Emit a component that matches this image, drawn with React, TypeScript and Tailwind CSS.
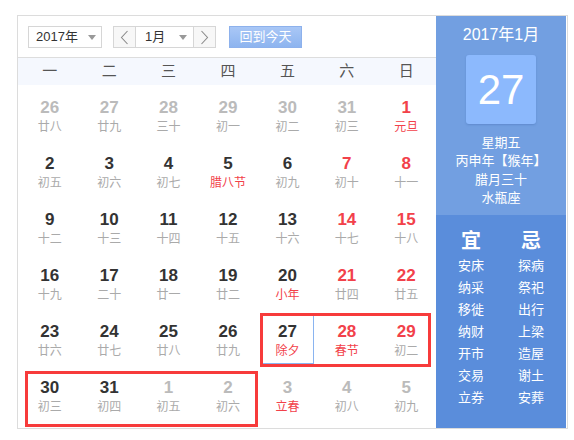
type Day = { n: number; l: string; dim?: boolean; redN?: boolean; redL?: boolean; sel?: boolean };

const weekdays = ['一', '二', '三', '四', '五', '六', '日'];

const days: Day[] = [
  { n: 26, l: '廿八', dim: true }, { n: 27, l: '廿九', dim: true }, { n: 28, l: '三十', dim: true },
  { n: 29, l: '初一', dim: true }, { n: 30, l: '初二', dim: true }, { n: 31, l: '初三', dim: true },
  { n: 1, l: '元旦', redN: true, redL: true },

  { n: 2, l: '初五' }, { n: 3, l: '初六' }, { n: 4, l: '初七' }, { n: 5, l: '腊八节', redL: true },
  { n: 6, l: '初九' }, { n: 7, l: '初十', redN: true }, { n: 8, l: '十一', redN: true },

  { n: 9, l: '十二' }, { n: 10, l: '十三' }, { n: 11, l: '十四' }, { n: 12, l: '十五' },
  { n: 13, l: '十六' }, { n: 14, l: '十七', redN: true }, { n: 15, l: '十八', redN: true },

  { n: 16, l: '十九' }, { n: 17, l: '二十' }, { n: 18, l: '廿一' }, { n: 19, l: '廿二' },
  { n: 20, l: '小年', redL: true }, { n: 21, l: '廿四', redN: true }, { n: 22, l: '廿五', redN: true },

  { n: 23, l: '廿六' }, { n: 24, l: '廿七' }, { n: 25, l: '廿八' }, { n: 26, l: '廿九' },
  { n: 27, l: '除夕', redL: true, sel: true }, { n: 28, l: '春节', redN: true, redL: true }, { n: 29, l: '初二', redN: true },

  { n: 30, l: '初三' }, { n: 31, l: '初四' }, { n: 1, l: '初五', dim: true }, { n: 2, l: '初六', dim: true },
  { n: 3, l: '立春', dim: true, redL: true }, { n: 4, l: '初八', dim: true }, { n: 5, l: '初九', dim: true },
];

const yi = ['安床', '纳采', '移徙', '纳财', '开市', '交易', '立券'];
const ji = ['探病', '祭祀', '出行', '上梁', '造屋', '谢土', '安葬'];

function Caret() {
  return <span className="w-0 h-0 border-x-[4px] border-x-transparent border-t-[5px] border-t-[#999]" />;
}

function Arrow({ dir }: { dir: 'l' | 'r' }) {
  return (
    <svg width="9" height="15" viewBox="0 0 9 15" fill="none" stroke="#8a8a8a" strokeWidth="1.1">
      <path d={dir === 'l' ? 'M7.5 1 L1.5 7.5 L7.5 14' : 'M1.5 1 L7.5 7.5 L1.5 14'} />
    </svg>
  );
}

export default function App() {
  return (
    <div className="pl-[17px] pt-[15px] font-['Liberation_Sans','Noto_Sans_CJK_SC',sans-serif]">
      <div className="relative w-[551px] h-[414px] border border-[#dcdcdc] flex bg-white">
        {/* ── 左侧日历 ── */}
        <div className="w-[418px] flex flex-col">
          <div className="h-[42px] flex items-center pl-[10px] pt-[1px] border-b border-[#ddd]">
            <div className="w-[74px] h-[22px] border border-[#d6d6d6] flex items-center justify-between pl-[7px] pr-[5px] text-[13px] text-[#333]">
              <span>2017年</span>
              <Caret />
            </div>
            <div className="ml-[11px] h-[22px] flex border border-[#d6d6d6]">
              <div className="w-[22px] flex items-center justify-center border-r border-[#d6d6d6] bg-[#f7f7f7]">
                <Arrow dir="l" />
              </div>
              <div className="w-[57px] flex items-center justify-between pl-[9px] pr-[6px] text-[13px] text-[#333]">
                <span>1月</span>
                <Caret />
              </div>
              <div className="w-[22px] flex items-center justify-center border-l border-[#d6d6d6] bg-[#f7f7f7]">
                <Arrow dir="r" />
              </div>
            </div>
            <div className="ml-[13px] w-[73px] h-[22px] flex items-center justify-center border border-[#8db1ec] bg-gradient-to-b from-[#a9c7f6] to-[#8db4ef] text-white text-[13px]">
              回到今天
            </div>
          </div>

          <div className="h-[27px] grid grid-cols-7 pl-[2px] bg-[#f5f8fe] items-center text-[15px] text-[#555]">
            {weekdays.map((w) => (
              <div key={w} className="text-center">{w}</div>
            ))}
          </div>

          <div className="grid grid-cols-7 auto-rows-[56px] pl-[2px] pt-[2px]">
            {days.map((d, i) => (
              <div key={i} className="p-[3px]">
                <div className={`h-full flex flex-col items-center pt-[7px] border ${d.sel ? 'border-[#8ab4f0]' : 'border-transparent'}`}>
                  <span
                    className={`text-[17px] leading-[20px] font-bold ${
                      d.redN ? 'text-[#f2414a]' : d.dim ? 'text-[#bbbbbb]' : 'text-[#333]'
                    }`}
                  >
                    {d.n}
                  </span>
                  <span className={`mt-[1px] text-[12px] leading-[16px] ${d.redL ? 'text-[#f2414a]' : 'text-[#aaa]'}`}>
                    {d.l}
                  </span>
                </div>
              </div>
            ))}
          </div>
        </div>

        {/* ── 右侧详情 ── */}
        <div className="w-[130px] flex flex-col text-white">
          <div className="h-[199px] bg-[#729fe1] flex flex-col items-center pt-[9px]">
            <div className="text-[16px] leading-[20px]">2017年1月</div>
            <div className="mt-[10px] w-[70px] h-[69px] rounded-[3px] bg-[#8cb9fd] shadow-[0_1px_2px_rgba(40,80,150,0.25)] flex items-center justify-center text-[42px]">
              27
            </div>
            <div className="mt-[10px] flex flex-col items-center text-[13px] leading-[18.3px]">
              <span>星期五</span>
              <span>丙申年【猴年】</span>
              <span>腊月三十</span>
              <span>水瓶座</span>
            </div>
          </div>
          <div className="flex-1 bg-[#5a8ddb] grid grid-cols-2 px-[5px] pt-[14px]">
            <div className="flex flex-col items-center">
              <span className="text-[20px] leading-[24px] font-bold">宜</span>
              <div className="mt-[2px] flex flex-col items-center text-[13px] leading-[22px]">
                {yi.map((t) => <span key={t}>{t}</span>)}
              </div>
            </div>
            <div className="flex flex-col items-center">
              <span className="text-[20px] leading-[24px] font-bold">忌</span>
              <div className="mt-[2px] flex flex-col items-center text-[13px] leading-[22px]">
                {ji.map((t) => <span key={t}>{t}</span>)}
              </div>
            </div>
          </div>
        </div>

        {/* ── 标注框 ── */}
        <div className="absolute left-[242px] top-[297px] w-[171px] h-[54px] border-[3px] border-[#f73b3b]" />
        <div className="absolute left-[7px] top-[355px] w-[233px] h-[56px] border-[3px] border-[#f73b3b]" />
      </div>
    </div>
  );
}
